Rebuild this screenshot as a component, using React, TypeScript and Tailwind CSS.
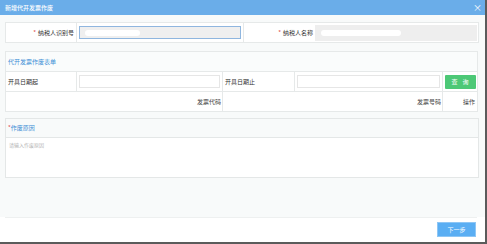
export default function App() {
  const font = { fontFamily: '"Noto Sans CJK SC", "Liberation Sans", sans-serif' }
  return (
    <div
      className="w-[487px] h-[244px] flex flex-col bg-[#f8fafa] border-r-2 border-b-2 border-[#5b5b5b] text-[6px] leading-none text-[#333]"
      style={font}
    >
      <div className="h-[15px] shrink-0 bg-[#6aade9] flex items-center justify-between pl-[5px] pr-[3px]">
        <span className="text-white text-[6px] font-medium">新增代开发票作废</span>
        <span className="text-white text-[9px] leading-none">×</span>
      </div>

      <div className="flex-1 flex flex-col pl-[5px] pr-[6px] pt-[7px]">
        <div className="h-[21px] grid grid-cols-[71px_167px_71px_1fr] border border-[#e6e9e9] bg-white">
          <div className="flex items-center justify-end pr-[2px] border-r border-[#e6e9e9]">
            <span className="text-[#e04b4b] mr-[2px]">*</span>纳税人识别号
          </div>
          <div className="flex items-center px-[2px] border-r border-[#e6e9e9]">
            <div className="h-[13px] w-full bg-[#efefef] border border-[#8fb6df] flex items-center pl-[5px]">
              <div className="h-[6px] w-[55px] bg-white rounded-[3px]" />
            </div>
          </div>
          <div className="flex items-center justify-end pr-[2px]">
            <span className="text-[#e04b4b] mr-[2px]">*</span>纳税人名称
          </div>
          <div className="flex items-center pr-[1px]">
            <div className="h-[16px] w-full bg-[#eeeeee] flex items-center pl-[6px]">
              <div className="h-[6px] w-[80px] bg-white rounded-[3px]" />
            </div>
          </div>
        </div>

        <div className="mt-[8px] mr-[1px] border border-[#e6e9e9] bg-white">
          <div className="h-[20px] flex items-center pl-[2px] text-[#3d8fd6] border-b border-[#e6e9e9] bg-[#fafcfc]">
            代开发票作废表单
          </div>
          <div className="h-[20px] grid grid-cols-[71px_146px_72px_148px_1fr] border-b border-[#e6e9e9]">
            <div className="flex items-center pl-[2px] border-r border-[#e6e9e9]">开具日期起</div>
            <div className="flex items-center px-[2px] border-r border-[#e6e9e9]">
              <div className="h-[13px] w-full bg-white border border-[#e6e6e6]" />
            </div>
            <div className="flex items-center pl-[2px] border-r border-[#e6e9e9]">开具日期止</div>
            <div className="flex items-center px-[2px] border-r border-[#e6e9e9]">
              <div className="h-[13px] w-full bg-white border border-[#e6e6e6]" />
            </div>
            <div className="flex items-center justify-center">
              <button className="h-[14px] w-[31px] bg-[#4cc876] text-white text-[6px] rounded-[1px] tracking-[5px] pl-[5px]">
                查询
              </button>
            </div>
          </div>
          <div className="h-[19px] grid grid-cols-[217px_220px_1fr] text-[#444]">
            <div className="flex items-center justify-end pr-[1px] border-r border-[#e6e9e9]">发票代码</div>
            <div className="flex items-center justify-end pr-[1px] border-r border-[#e6e9e9]">发票号码</div>
            <div className="flex items-center justify-end pr-[2px]">操作</div>
          </div>
        </div>

        <div className="mt-[6px] border border-[#e4e7e7] bg-white">
          <div className="h-[19px] flex items-center pl-[2px] bg-[#f8fafa] border-b border-[#e4e7e7] text-[#3d8fd6]">
            <span className="text-[#e04b4b]">*</span>作废原因
          </div>
          <div className="h-[39px] pl-[3px] pt-[4px] text-[#b4b4b4] text-[5px]">请输入作废原因</div>
        </div>
      </div>

      <div className="h-[25px] shrink-0 bg-white flex flex-col">
        <div className="mx-[5px] mr-[8px] border-t border-[#eef0f0]" />
        <div className="flex-1 flex items-start justify-end pr-[9px] pt-[4px]">
          <button className="h-[15px] w-[39px] bg-[#5aaef3] text-white text-[6px] border border-[#8ec6f5]">
            下一步
          </button>
        </div>
      </div>
    </div>
  )
}
